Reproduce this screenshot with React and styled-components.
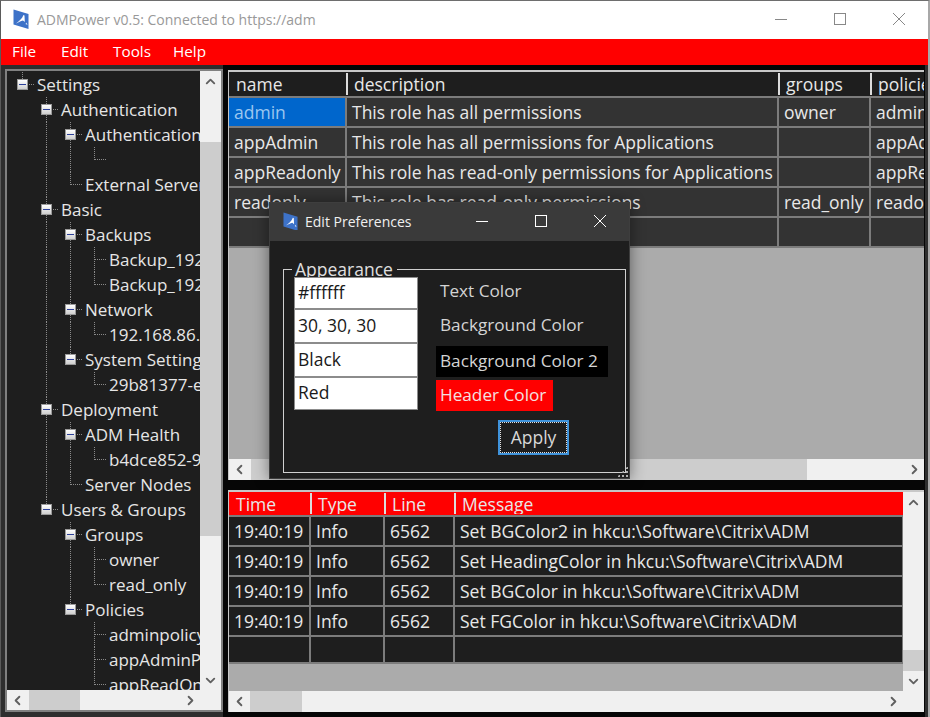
import React from 'react';
import styled, { createGlobalStyle } from 'styled-components';
import { ChevronUp, ChevronDown, ChevronLeft, ChevronRight } from 'lucide-react';

const Global = createGlobalStyle`
    html, body {
        margin: 0;
        padding: 0;
        width: 930px;
        height: 717px;
        overflow: hidden;
        background: #2e2e2e;
    }
    * {
        box-sizing: border-box;
    }
`;

const FONT = `"Open Sans", "Noto Sans", "Liberation Sans", sans-serif`;

const Window = styled.div`
    position: relative;
    width: 930px;
    height: 717px;
    display: flex;
    flex-direction: column;
    background: #2e2e2e;
    border-top: 1px solid #6e6e6e;
    border-left: 1px solid #5a5a5a;
    border-right: 2px solid #a8a8a8;
    font-family: ${FONT};
    font-size: 17.5px;
    overflow: hidden;
`;

const TitleBar = styled.div`
    height: 38px;
    flex: none;
    display: flex;
    align-items: center;
    padding: 0 0 2px 12px;
    background: #fff;
    color: #999;
    font-size: 14px;
`;

const TitleText = styled.span`
    margin-left: ${p => p.$gap || 8}px;
    flex: 1;
`;

const WinButton = styled.div`
    width: 59px;
    height: 36px;
    display: flex;
    align-items: center;
    justify-content: center;
`;

const MenuBar = styled.div`
    height: 26px;
    flex: none;
    display: flex;
    align-items: center;
    background: #ff0000;
    color: #fff;
    padding: 0 0 2px 11px;
    font-size: 15.3px;
`;

const MenuItem = styled.span`
    width: ${p => p.$w}px;
`;

const Main = styled.div`
    flex: 1;
    min-height: 0;
    display: flex;
    padding: 0 3px 0 4px;
`;

const TreePanel = styled.div`
    width: 218px;
    flex: none;
    margin: 4px 0 5px;
    display: grid;
    grid-template-columns: 1fr 21px;
    grid-template-rows: 1fr 20px;
    border: 2px solid #808080;
    background: #1e1e1e;
    min-height: 0;
`;

const TreeView = styled.div`
    overflow: hidden;
    padding-top: 1px;
    padding-left: 10px;
    min-height: 0;
`;

const TreeRow = styled.div`
    height: 25px;
    display: flex;
    align-items: center;
    color: #e6e6e6;
    font-size: 17px;
    white-space: nowrap;
`;

const Indent = styled.div`
    width: ${p => p.$w}px;
    height: 25px;
    flex: none;
    display: flex;
    align-items: center;
    position: relative;

    &::before {
        content: '';
        position: absolute;
        left: 5px;
        top: 0;
        height: ${p => (p.$line === 'through' ? '25px' : p.$line === 'end' ? '13px' : '0')};
        border-left: 1px dotted #8a8a8a;
    }

    &::after {
        content: '';
        position: absolute;
        left: 6px;
        top: 12px;
        width: ${p => (p.$leaf ? '11px' : '0')};
        border-top: 1px dotted #8a8a8a;
    }
`;

const ExpandBox = styled.div`
    width: 11px;
    height: 11px;
    position: relative;
    z-index: 1;
    background: linear-gradient(#fff, #cfcfcf);
    border: 1px solid #9a9a9a;
    display: flex;
    align-items: center;
    justify-content: center;

    &::before {
        content: '';
        width: 7px;
        height: 1px;
        background: #2b3f9a;
    }
`;

const GridPane = styled.div`
    flex: 1;
    display: flex;
    flex-direction: column;
    gap: 10px;
    padding: 5px 1px 0 5px;
    background: #060606;
    min-width: 0;
    min-height: 0;
`;

const Grid = styled.div`
    height: ${p => p.$h}px;
    flex: none;
    display: grid;
    grid-template-columns: ${p => (p.$vbar ? '1fr 21px' : '1fr')};
    grid-template-rows: 1fr 21px;
    background: #f0f0f0;
    border-top: 2px solid #c8c8c8;
    border-left: 1px solid #c8c8c8;
    min-height: 0;
`;

const GridBody = styled.div`
    background: #ababab;
    overflow: hidden;
    min-height: 0;
`;

const Row = styled.div`
    display: grid;
    grid-template-columns: ${p => p.$cols};
    height: ${p => p.$h || 30}px;
    background: ${p => p.$bg};
    border-bottom: 2px solid #7c7c7c;
    color: #e8e8e8;
    white-space: nowrap;
`;

const HeadCell = styled.div`
    display: flex;
    align-items: center;
    padding-left: ${p => (p.$first ? '7px' : '6px')};
    overflow: hidden;
    border-left: ${p => (p.$first ? '0' : '2px solid #dcdcdc')};
    margin: 1px 0 1px ${p => (p.$first ? '0' : '-1px')};
`;

const Cell = styled.div`
    display: flex;
    align-items: center;
    padding-left: 5px;
    overflow: hidden;
    border-right: 2px solid #7c7c7c;
    background: ${p => (p.$selected ? '#0066cc' : 'transparent')};
    color: ${p => (p.$selected ? '#9cc6f0' : 'inherit')};
`;

const Bar = styled.div`
    display: flex;
    flex-direction: ${p => (p.$vertical ? 'column' : 'row')};
    align-items: stretch;
    background: #f0f0f0;
    min-width: 0;
    min-height: 0;
    overflow: hidden;
`;

const Arrow = styled.div`
    flex: none;
    width: ${p => (p.$vertical ? '100%' : '20px')};
    height: ${p => (p.$vertical ? '20px' : '100%')};
    display: flex;
    align-items: center;
    justify-content: center;
    color: #606060;
`;

const Track = styled.div`
    flex: 1;
    min-width: 0;
    min-height: 0;
    display: flex;
    flex-direction: ${p => (p.$vertical ? 'column' : 'row')};
`;

const Thumb = styled.div`
    flex: none;
    background: #cdcdcd;
    ${p => p.$vertical
        ? `margin-top: ${p.$start}px; height: ${p.$size}px; width: 100%;`
        : `margin-left: ${p.$start}px; width: ${p.$size}px; height: 100%;`}
`;

const Corner = styled.div`
    background: #f0f0f0;
`;

const Dialog = styled.div`
    position: absolute;
    left: 268px;
    top: 201px;
    width: 361px;
    height: 277px;
    display: flex;
    flex-direction: column;
    background: #1e1e1e;
    border: 1px solid #3e3e3e;
    box-shadow: 0 0 14px rgba(0, 0, 0, 0.45);
`;

const DialogTitle = styled.div`
    height: 38px;
    flex: none;
    display: flex;
    align-items: center;
    padding: 0 0 2px 13px;
    background: #3a3a3a;
    color: #f0f0f0;
    font-size: 14px;
`;

const DialogBody = styled.div`
    flex: 1;
    min-height: 0;
    padding: 22px 3px 5px 13px;
    display: flex;
    position: relative;
`;

const Group = styled.fieldset`
    flex: 1;
    margin: 0;
    padding: 0 0 0 10px;
    border: 1px solid #d0d0d0;
    min-width: 0;
`;

const GroupLegend = styled.legend`
    margin-left: -2px;
    padding: 0 4px 0 3px;
    color: #e0e0e0;
    line-height: 12px;
    height: 12px;
`;

const FormGrid = styled.div`
    display: grid;
    grid-template-columns: 124px 1fr;
    column-gap: 18px;
    margin-top: 2px;
`;

const InputStack = styled.div`
    display: flex;
    flex-direction: column;
`;

const ColorInput = styled.input`
    width: 124px;
    height: ${p => p.$h}px;
    border: 1px solid #8c8c8c;
    background: #fff;
    color: #1a1a1a;
    font-family: ${FONT};
    font-size: 17.5px;
    padding: 0 3px 3px;
    outline: none;
`;

const LabelStack = styled.div`
    display: flex;
    flex-direction: column;
    align-items: flex-start;
`;

const ColorLabel = styled.div`
    height: ${p => p.$h}px;
    margin-top: ${p => p.$top || 0}px;
    display: flex;
    align-items: center;
    padding: 0 ${p => p.$pr || 4}px 3px 4px;
    background: ${p => p.$bg || 'transparent'};
    color: ${p => p.$color || '#d4d4d4'};
    font-size: 17.2px;
`;

const ApplyRow = styled.div`
    display: flex;
    margin-top: 9px;
    margin-left: 62px;
`;

const ApplyButton = styled.div`
    width: 71px;
    height: 35px;
    display: flex;
    align-items: center;
    justify-content: center;
    padding-bottom: 2px;
    border: 2px solid #3f93db;
    color: #d8d8d8;
    position: relative;

    &::before {
        content: '';
        position: absolute;
        inset: 0;
        border: 1px dotted #e0e0e0;
    }
`;

const Grip = styled.div`
    position: absolute;
    right: 1px;
    bottom: 1px;
    width: 11px;
    height: 11px;
    background: radial-gradient(circle, #b0b0b0 1px, transparent 1px) 0 0 / 4px 4px;
    clip-path: polygon(100% 0, 100% 100%, 0 100%);
`;

const Logo = ({ size = 16 }) => (
    <svg width={size} height={size * 1.25} viewBox="0 0 16 20">
        <path d="M0.5 0.5 L15.5 5 L15.5 20 L0.5 15.5 Z" fill="#3d72c8" />
        <path d="M3 14.5 C6 12 9 10 10.5 6 L11.5 6.5 L11.8 13 L10 11.5 C8 12 5 13.5 3 14.5 Z" fill="#fff" />
        <path d="M12.5 15 L14.5 16 L13.5 13.5 Z" fill="#dfe9f8" />
    </svg>
);

const Scrollbar = ({ vertical, start, size }) => (
    <Bar $vertical={vertical}>
        <Arrow $vertical={vertical}>
            {vertical ? <ChevronUp size={15} strokeWidth={3} /> : <ChevronLeft size={15} strokeWidth={3} />}
        </Arrow>
        <Track $vertical={vertical}>
            <Thumb $vertical={vertical} $start={start} $size={size} />
        </Track>
        <Arrow $vertical={vertical}>
            {vertical ? <ChevronDown size={15} strokeWidth={3} /> : <ChevronRight size={15} strokeWidth={3} />}
        </Arrow>
    </Bar>
);

const TREE = [
    [0, 'Settings', true],
    [1, 'Authentication', true],
    [2, 'Authentication', true],
    [3, '', false],
    [2, 'External Server', false],
    [1, 'Basic', true],
    [2, 'Backups', true],
    [3, 'Backup_192', false],
    [3, 'Backup_192', false],
    [2, 'Network', true],
    [3, '192.168.86.1', false],
    [2, 'System Setting', true],
    [3, '29b81377-e8', false],
    [1, 'Deployment', true],
    [2, 'ADM Health', true],
    [3, 'b4dce852-98', false],
    [2, 'Server Nodes', false],
    [1, 'Users & Groups', true],
    [2, 'Groups', true],
    [3, 'owner', false],
    [3, 'read_only', false],
    [2, 'Policies', true],
    [3, 'adminpolicy', false],
    [3, 'appAdminP', false],
    [3, 'appReadOn', false],
];

// a guide runs through a row when a later sibling still follows at that depth
const guideFor = (index, depth) => {
    const level = TREE[index][0];
    let more = false;
    for (let i = index + 1; i < TREE.length; i++) {
        if (TREE[i][0] < depth) break;
        if (TREE[i][0] === depth) {
            more = true;
            break;
        }
    }
    if (more) return 'through';
    return depth === level ? 'end' : 'none';
};

const ROLE_COLS = '118px 432px 92px 92px';
const ROLES = [
    ['admin', 'This role has all permissions', 'owner', 'adminpolicy'],
    ['appAdmin', 'This role has all permissions for Applications', '', 'appAdminPolicy'],
    ['appReadonly', 'This role has read-only permissions for Applications', '', 'appReadOnly'],
    ['readonly', 'This role has read-only permissions', 'read_only', 'readonly'],
    ['', '', '', ''],
];

const LOG_COLS = '82px 74px 70px 449px';
const LOGS = [
    ['19:40:19', 'Info', '6562', 'Set BGColor2 in hkcu:\\Software\\Citrix\\ADM'],
    ['19:40:19', 'Info', '6562', 'Set HeadingColor in hkcu:\\Software\\Citrix\\ADM'],
    ['19:40:19', 'Info', '6562', 'Set BGColor in hkcu:\\Software\\Citrix\\ADM'],
    ['19:40:19', 'Info', '6562', 'Set FGColor in hkcu:\\Software\\Citrix\\ADM'],
];

const App = () => (
    <Window>
        <Global />
        <TitleBar>
            <Logo />
            <TitleText>ADMPower v0.5: Connected to https://adm</TitleText>
            <WinButton>
                <svg width="12" height="12"><path d="M0 6.5H12" stroke="#888" /></svg>
            </WinButton>
            <WinButton>
                <svg width="12" height="12"><rect x="0.5" y="0.5" width="11" height="11" fill="none" stroke="#888" /></svg>
            </WinButton>
            <WinButton>
                <svg width="12" height="12"><path d="M0 0L12 12M12 0L0 12" stroke="#888" /></svg>
            </WinButton>
        </TitleBar>
        <MenuBar>
            <MenuItem $w={49}>File</MenuItem>
            <MenuItem $w={52}>Edit</MenuItem>
            <MenuItem $w={60}>Tools</MenuItem>
            <MenuItem $w={50}>Help</MenuItem>
        </MenuBar>
        <Main>
            <TreePanel>
                <TreeView>
                    {TREE.map(([level, text, box], i) => (
                        <TreeRow key={i}>
                            {Array.from({ length: level }, (_, d) => (
                                <Indent key={d} $w={24} $line={d > 0 ? guideFor(i, d) : 'none'} />
                            ))}
                            <Indent $w={20} $leaf $line={guideFor(i, level)}>
                                {box ? <ExpandBox /> : null}
                            </Indent>
                            {text}
                        </TreeRow>
                    ))}
                </TreeView>
                <Scrollbar vertical start={51} size={394} />
                <Scrollbar start={2} size={51} />
                <Corner />
            </TreePanel>
            <GridPane>
                <Grid $h={410}>
                    <GridBody>
                        <Row $cols={ROLE_COLS} $h={26} $bg="#1e1e1e">
                            <HeadCell $first>name</HeadCell>
                            <HeadCell>description</HeadCell>
                            <HeadCell>groups</HeadCell>
                            <HeadCell>policies</HeadCell>
                        </Row>
                        {ROLES.map((r, i) => (
                            <Row key={i} $cols={ROLE_COLS} $bg="#333333">
                                {r.map((c, j) => (
                                    <Cell key={j} $selected={i === 0 && j === 0}>{c}</Cell>
                                ))}
                            </Row>
                        ))}
                    </GridBody>
                    <Scrollbar start={2} size={556} />
                </Grid>
                <Grid $h={222} $vbar>
                    <GridBody>
                        <Row $cols={LOG_COLS} $h={25} $bg="#ff0000">
                            <HeadCell $first>Time</HeadCell>
                            <HeadCell>Type</HeadCell>
                            <HeadCell>Line</HeadCell>
                            <HeadCell>Message</HeadCell>
                        </Row>
                        {LOGS.map((r, i) => (
                            <Row key={i} $cols={LOG_COLS} $bg="#1e1e1e">
                                {r.map((c, j) => (
                                    <Cell key={j}>{c}</Cell>
                                ))}
                            </Row>
                        ))}
                        <Row $cols={LOG_COLS} $h={27} $bg="#1e1e1e">
                            <Cell /><Cell /><Cell /><Cell />
                        </Row>
                    </GridBody>
                    <Scrollbar vertical start={138} size={21} />
                    <Scrollbar start={1} size={52} />
                    <Corner />
                </Grid>
            </GridPane>
        </Main>
        <Dialog>
            <DialogTitle>
                <Logo size={15} />
                <TitleText $gap={7}>Edit Preferences</TitleText>
                <WinButton>
                    <svg width="12" height="12"><path d="M0 6.5H12" stroke="#fff" /></svg>
                </WinButton>
                <WinButton>
                    <svg width="12" height="12"><rect x="0.5" y="0.5" width="11" height="11" fill="none" stroke="#fff" /></svg>
                </WinButton>
                <WinButton>
                    <svg width="12" height="12"><path d="M0 0L12 12M12 0L0 12" stroke="#fff" /></svg>
                </WinButton>
            </DialogTitle>
            <DialogBody>
                <Group>
                    <GroupLegend>Appearance</GroupLegend>
                    <FormGrid>
                        <InputStack>
                            <ColorInput $h={32} readOnly value="#ffffff" />
                            <ColorInput $h={34} readOnly value="30, 30, 30" />
                            <ColorInput $h={34} readOnly value="Black" />
                            <ColorInput $h={33} readOnly value="Red" />
                        </InputStack>
                        <LabelStack>
                            <ColorLabel $h={30}>Text Color</ColorLabel>
                            <ColorLabel $h={30} $top={4}>Background Color</ColorLabel>
                            <ColorLabel $h={31} $top={5} $bg="#000" $pr={10}>Background Color 2</ColorLabel>
                            <ColorLabel $h={31} $top={3} $bg="#ff0000" $pr={7} $color="#f4e0e0">Header Color</ColorLabel>
                            <ApplyRow>
                                <ApplyButton>Apply</ApplyButton>
                            </ApplyRow>
                        </LabelStack>
                    </FormGrid>
                </Group>
                <Grip />
            </DialogBody>
        </Dialog>
    </Window>
);

export default App;
